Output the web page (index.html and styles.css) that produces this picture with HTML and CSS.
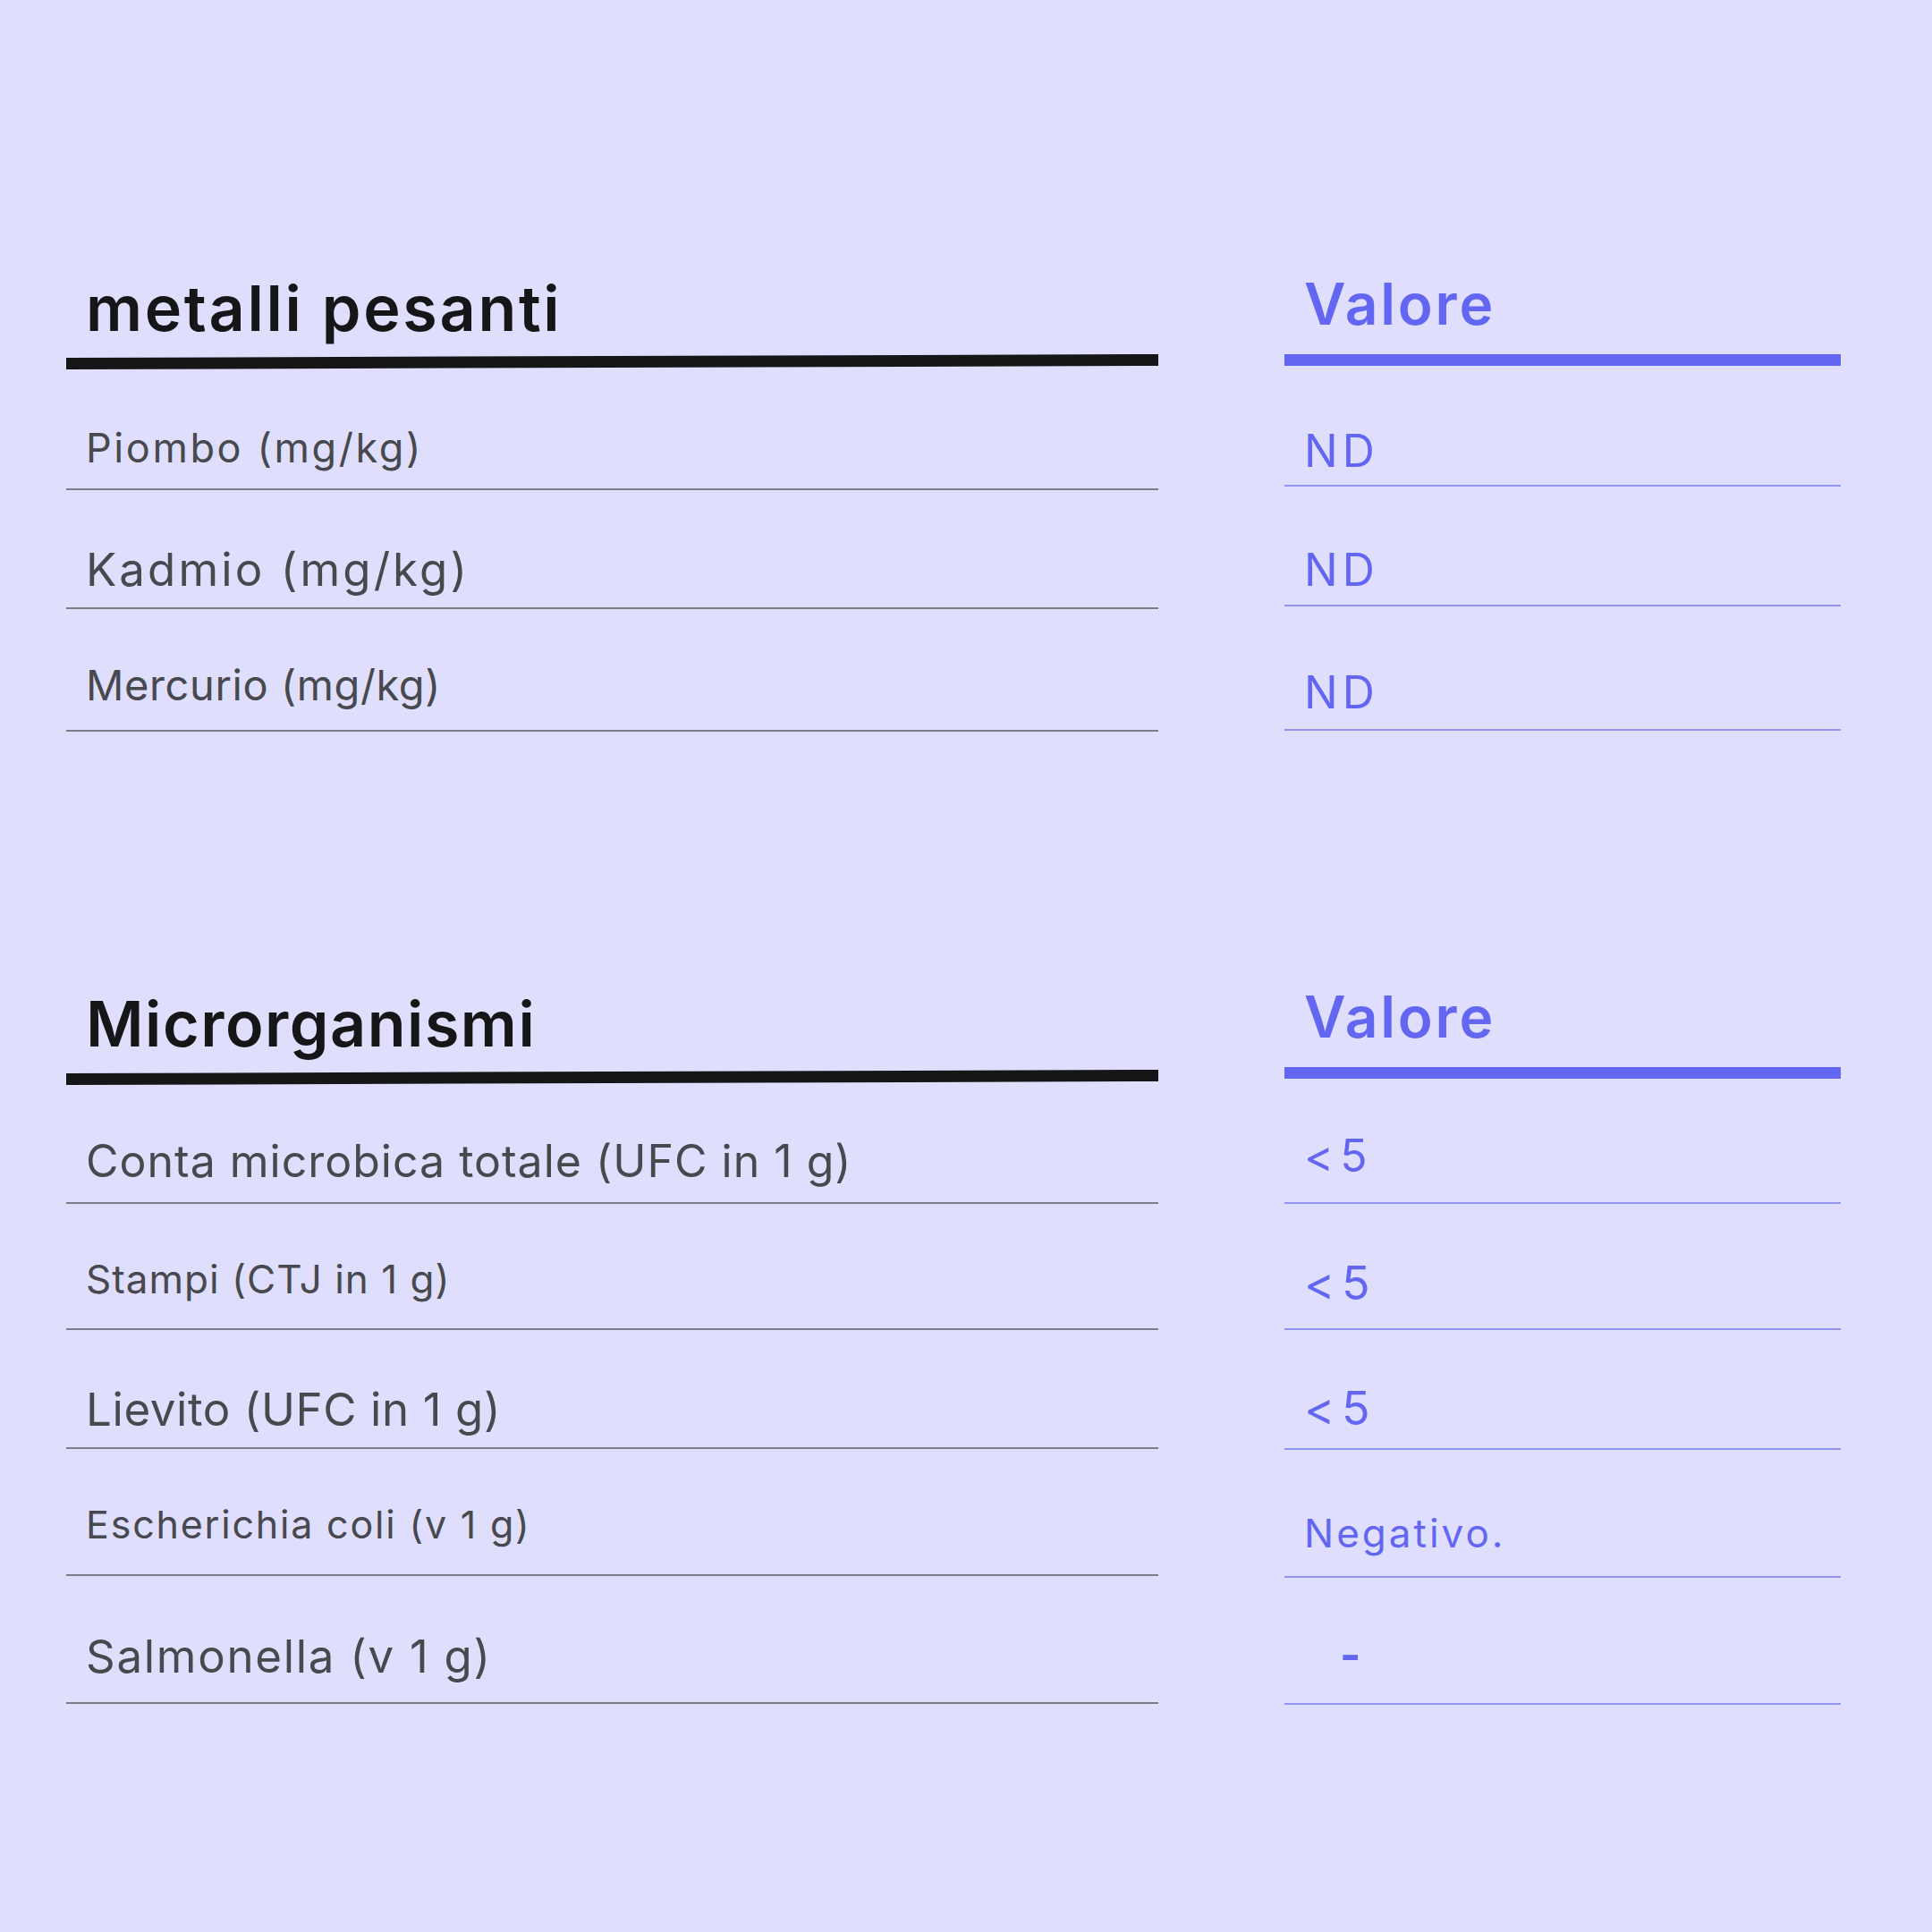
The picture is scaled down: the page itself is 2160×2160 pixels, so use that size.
FILE: index.html
```html
<!DOCTYPE html>
<html lang="it">
<head>
<meta charset="utf-8">
<title>Metalli pesanti e microrganismi</title>
<link rel="stylesheet" href="styles.css">
</head>
<body>
<main class="page">
  <section class="table t-metals">
    <div class="col col-name">
      <div class="head"><h2 class="head-text">metalli pesanti</h2></div>
      <div class="rule"></div>
      <div class="row"><span class="cell">Piombo (mg/kg)</span></div>
      <div class="row"><span class="cell">Kadmio (mg/kg)</span></div>
      <div class="row"><span class="cell">Mercurio (mg/kg)</span></div>
    </div>
    <div class="col col-val">
      <div class="head"><h2 class="head-text">Valore</h2></div>
      <div class="rule"></div>
      <div class="row"><span class="cell">ND</span></div>
      <div class="row"><span class="cell">ND</span></div>
      <div class="row"><span class="cell">ND</span></div>
    </div>
  </section>

  <section class="table t-micro">
    <div class="col col-name">
      <div class="head"><h2 class="head-text">Microrganismi</h2></div>
      <div class="rule"></div>
      <div class="row"><span class="cell">Conta microbica totale (UFC in 1 g)</span></div>
      <div class="row"><span class="cell">Stampi (CTJ in 1 g)</span></div>
      <div class="row"><span class="cell">Lievito (UFC in 1 g)</span></div>
      <div class="row"><span class="cell">Escherichia coli (v 1 g)</span></div>
      <div class="row"><span class="cell">Salmonella (v 1 g)</span></div>
    </div>
    <div class="col col-val">
      <div class="head"><h2 class="head-text">Valore</h2></div>
      <div class="rule"></div>
      <div class="row"><span class="cell">&lt; 5</span></div>
      <div class="row"><span class="cell">&lt; 5</span></div>
      <div class="row"><span class="cell">&lt; 5</span></div>
      <div class="row"><span class="cell">Negativo.</span></div>
      <div class="row"><span class="cell dash">-</span></div>
    </div>
  </section>
</main>
</body>
</html>
```

FILE: styles.css
```css
* { box-sizing: border-box; }

html, body {
  margin: 0;
  padding: 0;
}

body {
  background: #dfdffd;
  font-family: Inter, "Open Sans", "Liberation Sans", sans-serif;
  width: 2160px;
  height: 2160px;
}

.page {
  display: flex;
  flex-direction: column;
  gap: 242px;
  padding: 260px 0 0 74px;
}

.table {
  display: flex;
  align-items: flex-start;
  gap: 141px;
}

.col {
  display: flex;
  flex-direction: column;
}

.col-name { width: 1221px; }
.col-val  { width: 622px; }

/* ---------- headings ---------- */
.head {
  display: flex;
  align-items: flex-end;
}

.head-text {
  margin: 0;
  line-height: 1;
  font-weight: 600;
}

.col-name .head { padding: 0 0 18px 22px; height: 138px; }
.col-name .head-text { font-size: 70px; color: #161618; }
.t-metals .col-name .head-text { letter-spacing: 2.7px; }
.t-micro .col-name .head-text { letter-spacing: 1.5px; }

.col-val .head { padding: 0 0 24px 22px; height: 136px; }
.t-micro .col-val .head { height: 133px; }
.col-val .head-text { font-size: 64px; color: #6366f1; letter-spacing: 2.8px; }

.rule { height: 13px; }
.col-name .rule { background: #161618; transform: rotate(-0.19deg); }
.col-val .rule  { background: #6366f1; }

/* ---------- rows ---------- */
.row {
  display: flex;
  align-items: flex-end;
  border-bottom: 2px solid;
}

.col-name .row { border-color: #7d7d88; padding-left: 22px; }
.col-val .row  { border-color: #9394ee; padding-left: 22px; }

.cell {
  display: block;
  line-height: 1;
  font-weight: 400;
  white-space: nowrap;
}
.col-name .cell { color: #48484f; }
.col-val .cell  { color: #6366f1; }

/* metalli pesanti — names */
.t-metals .col-name .row:nth-child(3) { height: 137px; padding-bottom: 23px; font-size: 45px; letter-spacing: 2.6px; }
.t-metals .col-name .row:nth-child(4) { height: 133px; padding-bottom: 17px; font-size: 51px; letter-spacing: 3.1px; }
.t-metals .col-name .row:nth-child(5) { height: 137px; padding-bottom: 27px; font-size: 47px; letter-spacing: 0.6px; }

/* metalli pesanti — values */
.t-metals .col-val .row { font-size: 50px; letter-spacing: 5px; }
.t-metals .col-val .row:nth-child(3) { height: 135px; padding-bottom: 13px; }
.t-metals .col-val .row:nth-child(4) { height: 134px; padding-bottom: 14px; }
.t-metals .col-val .row:nth-child(5) { height: 139px; padding-bottom: 16px; }

/* microrganismi — names */
.t-micro .col-name .row:nth-child(3) { height: 135px; padding-bottom: 21px; font-size: 50px; letter-spacing: 1px; }
.t-micro .col-name .row:nth-child(4) { height: 141px; padding-bottom: 33px; font-size: 44px; letter-spacing: 1px; }
.t-micro .col-name .row:nth-child(5) { height: 133px; padding-bottom: 17px; font-size: 51px; letter-spacing: 0.6px; }
.t-micro .col-name .row:nth-child(6) { height: 142px; padding-bottom: 34px; font-size: 43px; letter-spacing: 1.8px; }
.t-micro .col-name .row:nth-child(7) { height: 143px; padding-bottom: 26px; font-size: 51px; letter-spacing: 1.7px; }

/* microrganismi — values */
.t-micro .col-val .row:nth-child(3) { height: 140px; padding-bottom: 27px; font-size: 50px; letter-spacing: -3.5px; }
.t-micro .col-val .row:nth-child(4) { height: 141px; padding-bottom: 24px; font-size: 52px; letter-spacing: -3.5px; }
.t-micro .col-val .row:nth-child(5) { height: 134px; padding-bottom: 18px; font-size: 52px; letter-spacing: -3.5px; }
.t-micro .col-val .row:nth-child(6) { height: 143px; padding-bottom: 26px; font-size: 44px; letter-spacing: 3px; }
.t-micro .col-val .row:nth-child(7) { height: 142px; padding-bottom: 29px; font-size: 50px; }

.dash { padding-left: 40px; font-weight: 700; }
```
